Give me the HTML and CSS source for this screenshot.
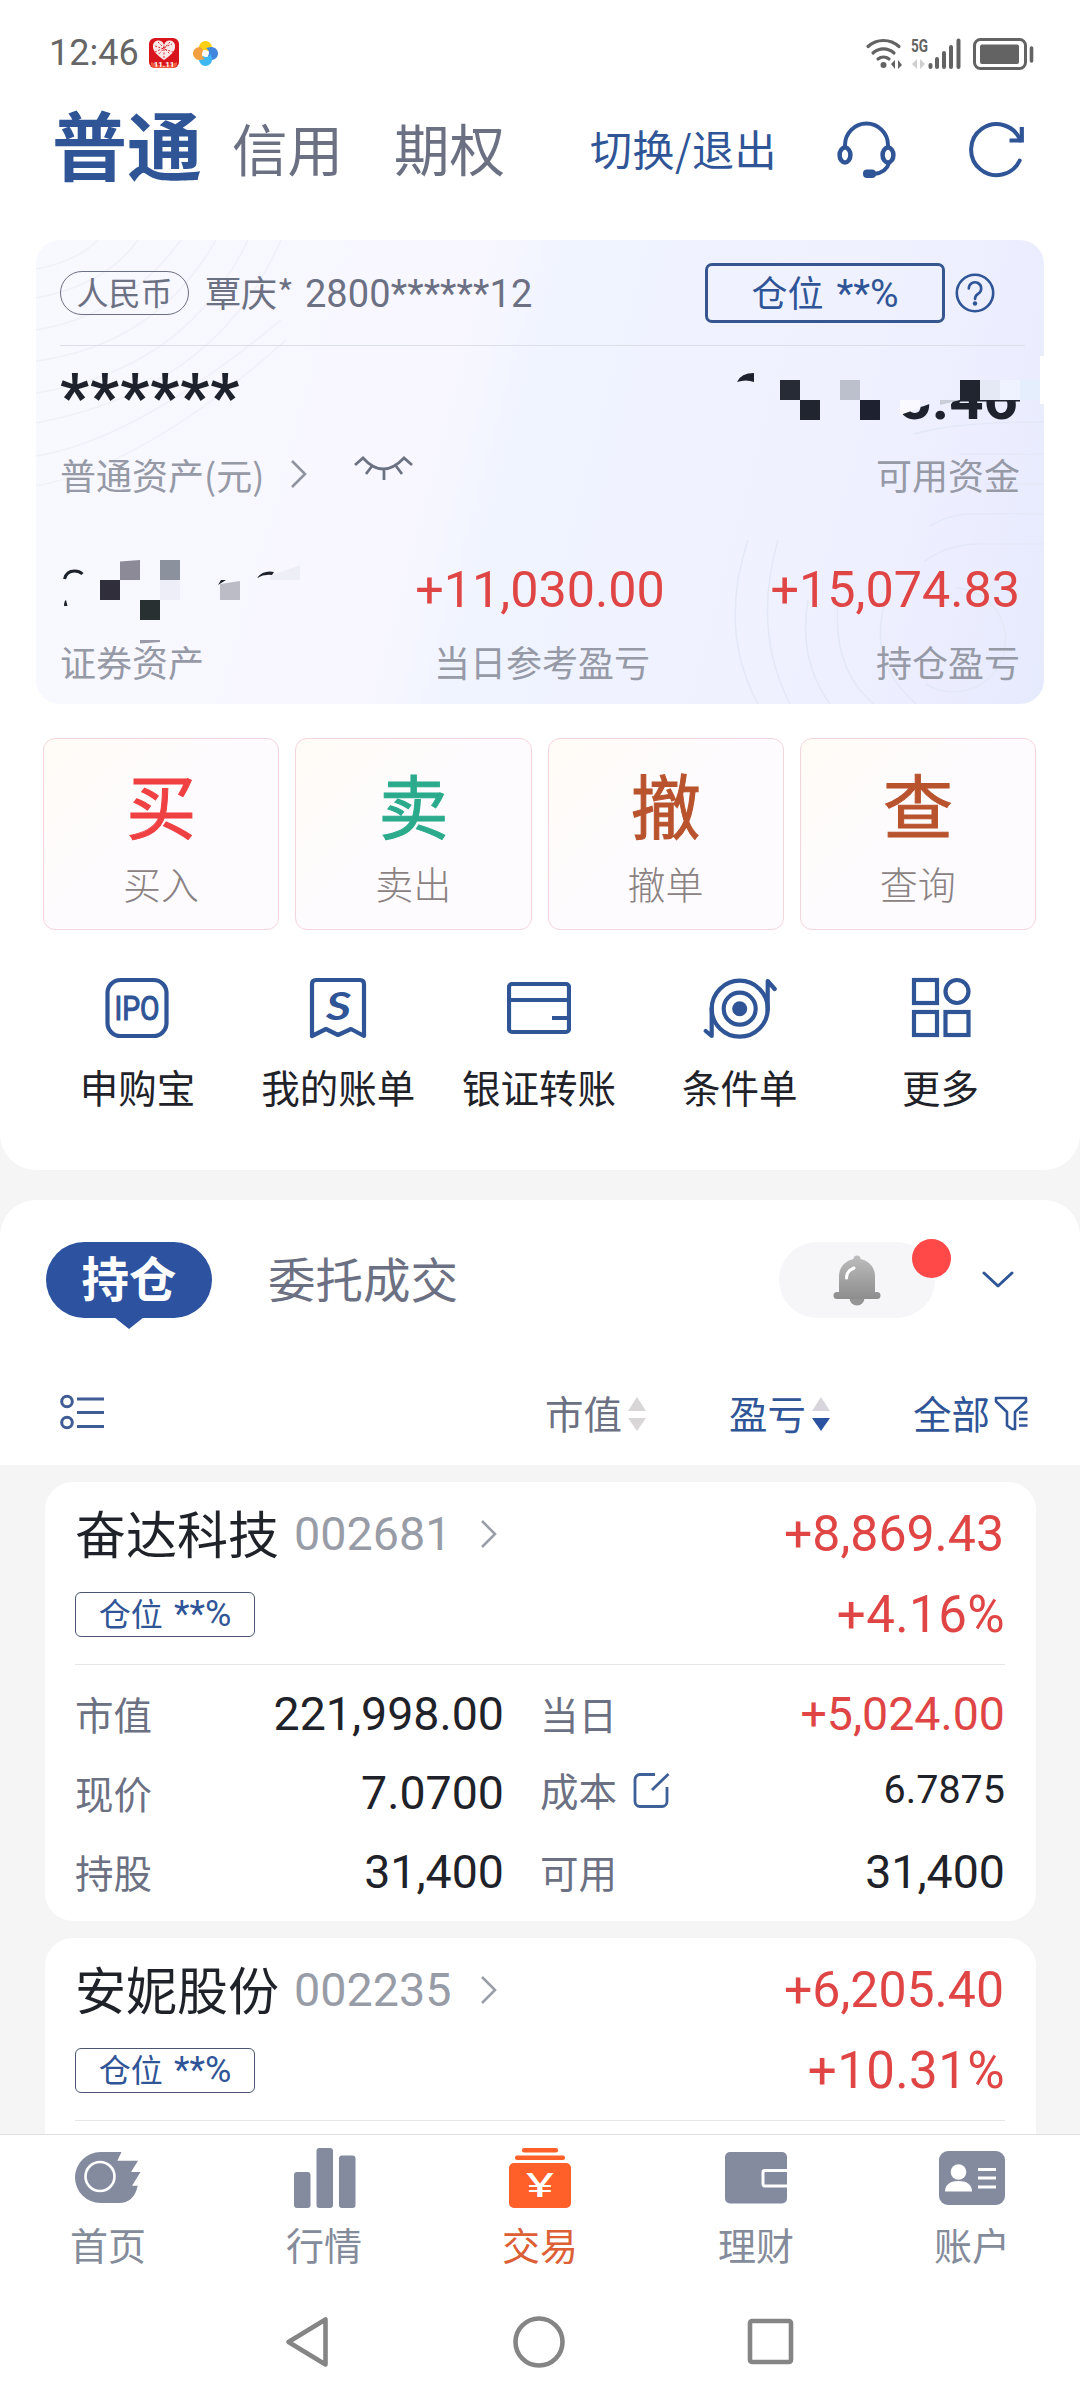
FILE: index.html
```html
<!DOCTYPE html>
<html lang="zh-CN">

<head>
  <meta charset="UTF-8">
  <meta name="viewport" content="width=device-width, initial-scale=1.0">
  <title>交易</title>
  <link rel="stylesheet" href="styles.css">
</head>

<body>
  <div class="content">

    <!-- Account section -->
    <section class="panel panel-top">
      <div class="status-bar">
        <span class="time">12:46</span>
        <svg class="app-heart" width="30" height="30" viewBox="0 0 30 30">
          <rect width="30" height="30" rx="6" fill="#d8141c" />
          <path d="M2 24q13 7 26 0v2a4 4 0 0 1-4 4H6a4 4 0 0 1-4-4z" fill="#f0583c" />
          <path d="M15 22C8 17 4 13 4 9a5.500 5.500 0 0 1 11-2 5.500 5.500 0 0 1 11 2c0 4-4 8-11 13z" fill="#fbe9ea" />
          <path d="M6 8l18 6M15 4v17M6 14l17-8M9 4l12 12M21 4L9 17" stroke="#d8141c" stroke-width=".9" stroke-dasharray="2 1.500" />
          <text x="15" y="29" text-anchor="middle" class="heart-text">11.11</text>
        </svg>
        <svg width="25" height="25" viewBox="0 0 25 25">
          <path d="M6 7a6.500 6.500 0 0 1 13-1c0 2-2 4-4 4-3-2-6-1-8 2z" fill="#fdd016" />
          <path d="M18 6a6.500 6.500 0 0 1 1 13c-2 0-4-2-4-4 2-3 1-6-2-8z" fill="#3f86dc" />
          <path d="M19 18a6.500 6.500 0 0 1-13 1c0-2 2-4 4-4 3 2 6 1 8-2z" fill="#3db8f2" />
          <path d="M7 19A6.500 6.500 0 0 1 6 6c2 0 4 2 4 4-2 3-1 6 2 8z" fill="#f3a040" />
          <circle cx="12.500" cy="12.500" r="2.400" fill="#fff" />
        </svg>
        <svg class="status-icons" width="170" height="36" viewBox="0 0 170 36" fill="none" stroke="#636363" stroke-linecap="round">
          <g stroke-width="3.200">
            <path d="M3 11.500a23 23 0 0 1 31 0" />
            <path d="M8 18a15.500 15.500 0 0 1 21 0" />
            <path d="M13 24a8.500 8.500 0 0 1 11 0" />
          </g>
          <circle cx="18.500" cy="30" r="3" fill="#636363" stroke="none" />
          <path d="M26 29l4-4v9zM33 25v9l4-4z" fill="#636363" stroke="none" />
          <text x="46" y="16.500" textLength="17" lengthAdjust="spacingAndGlyphs" class="net-text">5G</text>
          <path d="M47 29l5-5v10zM55 24v10l5-5z" fill="#cfcfcf" stroke="none" />
          <path d="M65.500 30v2M72 24v8M79 18v14M86 12v20M93.500 5.500V32" stroke-width="4" />
          <rect x="109.500" y="4.500" width="51" height="29" rx="6" stroke-width="3" />
          <rect x="115" y="9.500" width="39" height="19.500" rx="2" fill="#636363" stroke="none" />
          <path d="M166.500 13v13" stroke-width="3.600" />
        </svg>
      </div>

      <header class="header">
        <span class="account-tab active">普通</span>
        <span class="account-tab">信用</span>
        <span class="account-tab">期权</span>
        <span class="switch">切换/退出</span>
        <svg class="icon-service" width="62" height="60" viewBox="0 0 62 60" fill="none" stroke="#2f5597" stroke-width="4.500">
          <ellipse cx="9" cy="35" rx="5.400" ry="7.500" />
          <ellipse cx="52" cy="35" rx="5.400" ry="7.500" />
          <path d="M9 27v-2a21.500 21.500 0 0 1 43 0v2M53 43c-2 7-7 10-15 11" stroke-width="4" />
          <rect x="27" y="49.500" width="13" height="8.500" rx="4" fill="#2f5597" stroke="none" />
        </svg>
        <svg class="icon-refresh" width="62" height="58" viewBox="0 0 62 58" fill="none" stroke="#2f5597" stroke-width="4">
          <path d="M53.700 39.500A25.500 25.500 0 1 1 54.400 19.500" stroke-linecap="round" />
          <path d="M55.800 6v13.500H43.500" stroke-width="4.200" />
        </svg>
      </header>

      <div class="asset-card">
        <svg class="card-lines" width="1008" height="464" viewBox="0 0 1008 464" fill="none" stroke-width="1.500">
          <g stroke="#eff0f8">
            <path d="M0 29Q40 22 62 0M0 58Q70 45 102 0M0 90Q90 75 145 0M0 121Q120 105 180 0M0 153Q150 130 212 0M0 183Q180 150 245 0M0 216Q100 200 245 80M0 246Q110 225 250 100" />
          </g>
          <g stroke="#e3e8f6">
            <path d="M1008 182q-90 0-130 12M1008 214h-84M1008 244h-60M1008 274h-78q-20 2-36 12M1008 304h-70q-30 2-50 18" />
            <path d="M712 300q-30 90 10 164M742 300q-26 90 12 164M772 360q-10 60 22 104M802 360q-6 70 36 104" />
            <path d="M920 348a52 52 0 1 1-30 96M850 360q-20 60 30 104" />
          </g>
        </svg>

        <div class="card-head">
          <span class="currency">人民币</span>
          <span class="owner">覃庆* <span class="num">2800******12</span></span>
          <span class="position-btn">仓位 <span class="num">**%</span></span>
          <svg width="40" height="40" viewBox="0 0 40 40" fill="none" stroke="#2f5597" stroke-width="2.600">
            <circle cx="20" cy="20" r="18.200" />
            <path d="M13.800 15.500a6.200 6.200 0 1 1 9.500 5.200c-2.300 1.500-3.300 2.700-3.300 5.300" stroke-linecap="round" />
            <circle cx="20" cy="30.500" r="2.200" fill="#2f5597" stroke="none" />
          </svg>
        </div>

        <div class="total">******</div>
        <div class="card-row total-label">
          <span>普通资产(元)</span>
          <svg class="chevron" width="18" height="30" viewBox="0 0 18 30" fill="none" stroke="#8f93a0" stroke-width="2.600"><path d="M2 2l13 13L2 28" /></svg>
          <svg class="eye" width="60" height="28" viewBox="0 0 60 28" fill="none" stroke="#6b7282" stroke-width="2.800">
            <path d="M1 11l8-7q20 22 41 0l8 7M18 12l-6 8M30 14v12M42 12l6 8" />
          </svg>
          <span class="right">可用资金</span>
        </div>
        <div class="card-row profit">
          <span class="num center">+11,030.00</span>
          <span class="num right">+15,074.83</span>
        </div>
        <div class="card-row profit-label">
          <span>证券资产</span>
          <span class="center">当日参考盈亏</span>
          <span class="right">持仓盈亏</span>
        </div>

        <!-- Blocks that cover the private amounts -->
        <svg class="mosaic" width="1008" height="464" viewBox="0 0 1008 464">
          <defs>
            <clipPath id="amount-cut"><path d="M864 182v-9l24-7 16-6h84v24z" /></clipPath>
          </defs>
          <text x="982" y="178.500" text-anchor="end" class="amount" clip-path="url(#amount-cut)">5.46</text>
          <path d="M701 142q4-9 17-9v9q-8-3-17 0z" fill="#1d222d" />
          <rect x="744" y="140" width="20" height="20" fill="#262b36" />
          <rect x="764" y="160" width="20" height="20" fill="#20252f" />
          <rect x="804" y="140" width="20" height="20" fill="#bcc0cc" />
          <rect x="824" y="160" width="20" height="20" fill="#1e2230" />
          <path d="M864 160h20v8l-20 7z" fill="#f9f9ff" />
          <path d="M904 160h20l-20 5z" fill="#c9cdd8" />
          <rect x="924" y="140" width="20" height="20" fill="#20252f" />
          <rect x="944" y="140" width="20" height="20" fill="#e5e9f5" />
          <path d="M924 160.800h60" stroke="#20252f" stroke-width="1.600" />
          <rect x="964" y="140" width="20" height="20" fill="#eef3ff" />
          <rect x="984" y="140" width="20" height="20" fill="#e4eefd" />
          <rect x="1004" y="116" width="4" height="48" fill="#fff" />

          <path d="M28.500 339q2-8 10-8 5 0 8 3" fill="none" stroke="#1d222d" stroke-width="3" />
          <path d="M28 366q0-5 2-6l1.500 6z" fill="#1d222d" />
          <path d="M84 321.500l20-1.500v20H84z" fill="#8c8a96" />
          <rect x="124" y="320" width="20" height="20" fill="#8b929e" />
          <rect x="64" y="340" width="20" height="20" fill="#302e3a" />
          <rect x="124" y="340" width="20" height="20" fill="#eeeef8" />
          <rect x="104" y="360" width="20" height="20" fill="#283032" />
          <path d="M104 400h20v2l-20 1.500z" fill="#9a9aa8" />
          <path d="M182 345l3-5h5z" fill="#1d222d" />
          <path d="M184 344l20-3v19h-20z" fill="#bbbcc6" />
          <path d="M221 338q6-8 17-6l-2 3q-8-1-15 3z" fill="#1d222d" />
          <path d="M234 336l30-11v15h-30z" fill="#eeeef7" />
        </svg>
      </div>

      <div class="trade-grid">
        <div class="trade-item"><span class="trade-big buy">买</span><span class="trade-name">买入</span></div>
        <div class="trade-item"><span class="trade-big sell">卖</span><span class="trade-name">卖出</span></div>
        <div class="trade-item"><span class="trade-big">撤</span><span class="trade-name">撤单</span></div>
        <div class="trade-item"><span class="trade-big">查</span><span class="trade-name">查询</span></div>
      </div>

      <div class="shortcut-grid">
        <div class="shortcut">
          <svg width="64" height="64" viewBox="0 0 64 64" fill="none" stroke="#2f5597" stroke-width="4.200">
            <rect x="2.500" y="4" width="59" height="56" rx="13" />
            <text x="9.500" y="44" textLength="45" lengthAdjust="spacingAndGlyphs" class="ipo-text">IPO</text>
          </svg>
          <span>申购宝</span>
        </div>
        <div class="shortcut">
          <svg width="64" height="64" viewBox="0 0 64 64" fill="none" stroke="#2f5597" stroke-width="4.200" stroke-linejoin="round">
            <path d="M6 60V8q0-4 4-4h44q4 0 4 4v52l-13-7-13 6-12-6z" />
            <text x="20" y="44" textLength="25" lengthAdjust="spacingAndGlyphs" class="bill-text">S</text>
          </svg>
          <span>我的账单</span>
        </div>
        <div class="shortcut">
          <svg width="64" height="64" viewBox="0 0 64 64" fill="none" stroke="#2f5597" stroke-width="4.200">
            <rect x="2" y="8" width="60" height="48" rx="3" />
            <path d="M2 24h60M62 42H45" />
          </svg>
          <span>银证转账</span>
        </div>
        <div class="shortcut">
          <svg width="74" height="64" viewBox="0 0 74 64" fill="none" stroke="#2f5597" stroke-width="4.200">
            <circle cx="36.700" cy="32.700" r="28" />
            <circle cx="36.700" cy="32.700" r="16" />
            <circle cx="36.700" cy="32.700" r="7.500" fill="#2f5597" stroke="none" />
            <path d="M64.700 34V5l7 8M8.700 32v28l-6-5" stroke-linejoin="round" stroke-linecap="round" />
          </svg>
          <span>条件单</span>
        </div>
        <div class="shortcut">
          <svg width="64" height="64" viewBox="0 0 64 64" fill="none" stroke="#2f5597" stroke-width="4.200">
            <rect x="5" y="4" width="23" height="23" />
            <circle cx="48" cy="15.500" r="11.500" />
            <rect x="5" y="36" width="23" height="23" />
            <rect x="36.500" y="36" width="23" height="23" />
          </svg>
          <span>更多</span>
        </div>
      </div>
    </section>

    <!-- Holdings section -->
    <section class="panel panel-holdings">
      <div class="hold-tabs">
        <span class="hold-tab active">持仓</span>
        <span class="hold-tab">委托成交</span>
        <div class="bell">
          <svg width="48" height="52" viewBox="0 0 48 52">
            <defs>
              <linearGradient id="bell-fill" x1="0" y1="0" x2="0" y2="1">
                <stop offset="0" stop-color="#bdbdbd" />
                <stop offset="1" stop-color="#8d8d8d" />
              </linearGradient>
            </defs>
            <circle cx="24" cy="44" r="7.500" fill="#969696" />
            <path d="M20.500 5a3.500 3.500 0 0 1 7 0c9 2 14.500 9 14.500 17v16h2a3.500 3.500 0 0 1 0 7H4a3.500 3.500 0 0 1 0-7h2V22c0-8 5.500-15 14.500-17z" fill="url(#bell-fill)" />
            <path d="M13.500 24q0-7 7.500-10" fill="none" stroke="#fff" stroke-width="3" stroke-linecap="round" />
          </svg>
          <span class="dot"></span>
        </div>
        <svg width="32" height="18" viewBox="0 0 32 18" fill="none" stroke="#2f5597" stroke-width="3" stroke-linecap="round" stroke-linejoin="round"><path d="M2 2l14 13L30 2" /></svg>
      </div>

      <div class="sort-bar">
        <svg width="44" height="36" viewBox="0 0 44 36" fill="none" stroke="#3f5c94" stroke-width="3">
          <circle cx="7" cy="7.500" r="5.300" />
          <circle cx="7" cy="28.500" r="5.300" />
          <path d="M17 5h27M17 18.500h27M17 32.500h27" />
        </svg>
        <span class="sort-item market">市值
          <svg width="18" height="36" viewBox="0 0 18 36" fill="#d8d6d6"><path d="M9 1l9 14H0zM9 35l9-13H0z" /></svg>
        </span>
        <span class="sort-item active">盈亏
          <svg width="18" height="36" viewBox="0 0 18 36" fill="#d8d6dc"><path d="M9 1l9 14H0z" /><path d="M9 35l9-13H0z" fill="#2b52a0" /></svg>
        </span>
        <span class="sort-item active filter">全部
          <svg width="34" height="36" viewBox="0 0 34 36" fill="none" stroke="#2f5597" stroke-width="2.600" stroke-linejoin="round">
            <path d="M2 2h30v3.500l-11 10.500v17h-3l-5-3.500V16L2 5.500z" />
            <path d="M25 16.500h8.500M25 23h8.500M25 29.500h8.500" />
          </svg>
        </span>
      </div>
    </section>

    <div class="stock-list">
      <div class="stock">
        <div class="stock-head">
          <div class="stock-title">
            <span class="stock-name">奋达科技</span>
            <span class="num stock-code">002681</span>
            <svg width="18" height="30" viewBox="0 0 18 30" fill="none" stroke="#9a9ea8" stroke-width="2.600"><path d="M2 2l13 13L2 28" /></svg>
            <span class="num gain">+8,869.43</span>
          </div>
          <div class="stock-sub">
            <span class="tag">仓位 <span class="num">**%</span></span>
            <span class="num gain">+4.16%</span>
          </div>
        </div>
        <div class="stock-data">
          <div class="cell"><span class="label">市值</span><span class="num">221,998.00</span></div>
          <div class="cell"><span class="label">当日</span><span class="num red">+5,024.00</span></div>
          <div class="cell"><span class="label">现价</span><span class="num">7.0700</span></div>
          <div class="cell cost"><span class="label">成本</span>
            <svg width="37" height="37" viewBox="0 0 37 37" fill="none" stroke="#3f5f98" stroke-width="2.800">
              <path d="M22 2.500H7A5 5 0 0 0 2 7.500v22a5 5 0 0 0 5 5h22a5 5 0 0 0 5-5V15" />
              <path d="M19 18L35.500 2" />
            </svg>
            <span class="num">6.7875</span>
          </div>
          <div class="cell"><span class="label">持股</span><span class="num">31,400</span></div>
          <div class="cell"><span class="label">可用</span><span class="num">31,400</span></div>
        </div>
      </div>

      <div class="stock">
        <div class="stock-head">
          <div class="stock-title">
            <span class="stock-name">安妮股份</span>
            <span class="num stock-code">002235</span>
            <svg width="18" height="30" viewBox="0 0 18 30" fill="none" stroke="#9a9ea8" stroke-width="2.600"><path d="M2 2l13 13L2 28" /></svg>
            <span class="num gain">+6,205.40</span>
          </div>
          <div class="stock-sub">
            <span class="tag">仓位 <span class="num">**%</span></span>
            <span class="num gain">+10.31%</span>
          </div>
        </div>
        <div class="stock-data"></div>
      </div>
    </div>
  </div>

  <!-- Bottom navigation -->
  <nav class="tab-bar">
    <div class="tab">
      <svg width="72" height="60" viewBox="0 0 72 60">
        <path d="M28.500 4h21l-4.200 8.700h20.700L59 24h9.500L60 37.700h5.700Q62 55 46.800 55H28.500a25.500 25.500 0 0 1 0-51z" fill="#848b9f" />
        <circle cx="28" cy="28.500" r="14.500" fill="none" stroke="#fff" stroke-width="2.600" />
      </svg>
      <span>首页</span>
    </div>
    <div class="tab">
      <svg width="64" height="60" viewBox="0 0 64 60" fill="#848b9f">
        <rect x="2" y="24" width="16.500" height="36" rx="3" />
        <rect x="24.500" y="0" width="16.500" height="60" rx="3" />
        <rect x="47" y="7.500" width="16.500" height="52.500" rx="3" />
      </svg>
      <span>行情</span>
    </div>
    <div class="tab active">
      <svg width="62" height="60" viewBox="0 0 62 60" fill="#ff5f28">
        <rect x="13" y="0" width="36" height="4.500" rx="2" />
        <rect x="6" y="7.500" width="50" height="4.500" rx="2" />
        <rect x="0" y="15" width="62" height="45" rx="5" />
        <text x="17" y="49" textLength="28" lengthAdjust="spacingAndGlyphs" class="yen">¥</text>
      </svg>
      <span>交易</span>
    </div>
    <div class="tab">
      <svg width="62" height="60" viewBox="0 0 62 60">
        <rect x="0" y="4" width="62" height="51.500" rx="5" fill="#848b9f" />
        <path d="M62 22.500H40q-2 0-2 2v11.500q0 2 2 2h22" fill="none" stroke="#fff" stroke-width="3" />
      </svg>
      <span>理财</span>
    </div>
    <div class="tab">
      <svg width="66" height="60" viewBox="0 0 66 60">
        <rect x="0" y="3" width="66" height="54" rx="9" fill="#848b9f" />
        <circle cx="19.500" cy="24" r="7.800" fill="#fff" />
        <path d="M6 43.500C6 36 12 33 19.500 33S33 36 33 43.500z" fill="#fff" />
        <path d="M39 21.500h18M39 30h18M39 39h18" stroke="#fff" stroke-width="3.200" />
      </svg>
      <span>账户</span>
    </div>
  </nav>
  <div class="system-bar">
    <svg width="46" height="52" viewBox="0 0 46 52"><path d="M40.500 3.500v45L3.500 26z" /></svg>
    <svg width="52" height="52" viewBox="0 0 52 52"><circle cx="26" cy="26" r="23.500" /></svg>
    <svg width="48" height="48" viewBox="0 0 48 48"><rect x="3" y="3" width="41" height="41" rx="2" /></svg>
  </div>
</body>

</html>
```

FILE: styles.css
```css
* {
  box-sizing: border-box;
}

body {
  margin: 0;
  width: 1080px;
  height: 2400px;
  display: flex;
  flex-direction: column;
  overflow: hidden;
  background: #f5f5f6;
  color: #1f2229;
  font-family: "Noto Sans CJK SC", sans-serif;
}

svg {
  display: block;
  flex-shrink: 0;
}

.num {
  font-family: Roboto, "Noto Sans CJK SC", sans-serif;
}

.content {
  flex: 1;
  min-height: 0;
  overflow: hidden;
}

.panel {
  background: #fff;
}

.panel-top {
  height: 1170px;
  border-radius: 0 0 36px 36px;
}

/* Status bar */
.status-bar {
  display: flex;
  align-items: center;
  height: 106px;
  padding: 0 45px 0 49px;
}

.time {
  width: 100px;
  font-family: Roboto, sans-serif;
  font-size: 36px;
  color: #666;
}

.app-heart {
  margin-right: 14px;
}

.heart-text {
  font: bold 8px Roboto, sans-serif;
  fill: #fff;
}

.status-icons {
  margin-left: auto;
}

.net-text {
  font: bold 18px Roboto, sans-serif;
  fill: #636363;
  stroke: none;
}

/* Header */
.header {
  display: flex;
  align-items: center;
  height: 88px;
  padding: 0 52px;
  line-height: 88px;
}

.account-tab {
  margin-right: 51px;
  padding-bottom: 7px;
  font-size: 55.5px;
  color: #6c7083;
}

.account-tab.active {
  margin-right: 30px;
  padding-bottom: 15px;
  font-size: 75px;
  font-weight: bold;
  color: #2f5597;
}

.switch {
  margin-left: 34px;
  padding-bottom: 4px;
  font-size: 42px;
  letter-spacing: .5px;
  color: #2f5597;
}

.icon-service {
  margin-left: auto;
}

.icon-refresh {
  margin-left: 68px;
}

/* Asset card */
.asset-card {
  position: relative;
  width: 1008px;
  height: 464px;
  margin: 46px 36px 34px;
  padding: 0 24px;
  border-radius: 24px;
  overflow: hidden;
  background: linear-gradient(105deg, #f8f8ff 0%, #f8f7ff 40%, #eff4ff 48%, #f0f1ff 75%, #eceeff 88%, #e6eafd 100%);
  color: #9699a6;
  font-size: 36px;
}

.card-lines,
.mosaic {
  position: absolute;
  left: 0;
  top: 0;
}

.card-head,
.total,
.card-row {
  position: relative;
}

.card-head {
  display: flex;
  align-items: center;
  width: 965px;
  height: 106px;
  padding-right: 30px;
  border-bottom: 1px solid #dcdee8;
  color: #6c7083;
}

.currency {
  width: 129px;
  height: 44px;
  border: 1px solid #6c7083;
  border-radius: 22px;
  font-size: 32px;
  line-height: 39px;
  text-align: center;
}

.owner {
  margin-left: 16px;
  line-height: 60px;
  word-spacing: 3px;
}

.owner .num {
  font-size: 38px;
  letter-spacing: .1px;
}

.position-btn {
  width: 240px;
  height: 60px;
  margin-left: auto;
  margin-right: 10px;
  border: 3px solid #36568f;
  border-radius: 7px;
  color: #2f5597;
  font-size: 36px;
  line-height: 50px;
  text-align: center;
  word-spacing: 5px;
}

.position-btn .num {
  font-size: 39px;
}

.total {
  height: 84px;
  color: #1d222d;
  font: bold 64px/103px Roboto, sans-serif;
  letter-spacing: 1px;
}

.card-row {
  display: flex;
  align-items: center;
  width: 960px;
}

.card-row .right {
  width: 320px;
  margin-left: auto;
  text-align: right;
}

.card-row .center {
  position: absolute;
  left: 317px;
  width: 326px;
  text-align: center;
}

.total-label {
  height: 88px;
}

.chevron {
  margin-left: 26px;
}

.eye {
  margin-left: 46px;
  margin-bottom: 13px;
}

.profit {
  height: 80px;
  margin-top: 31px;
  color: #e04545;
  font-size: 50.3px;
}

.profit-label {
  height: 64px;
}

.profit-label .center {
  left: 319px;
}

.amount {
  font: bold 60px Roboto, sans-serif;
  fill: #1d222d;
}

/* Buy / sell buttons */
.trade-grid {
  display: grid;
  grid-template-columns: repeat(4, 1fr);
  gap: 16px;
  padding: 0 44px 0 43px;
}

.trade-item {
  display: flex;
  flex-direction: column;
  align-items: center;
  height: 192px;
  padding-top: 25px;
  border: 1px solid #f5d5dc;
  border-radius: 12px;
  background: linear-gradient(135deg, #fffcf6 0%, #fefbfe 45%, #fefbff 100%);
}

.trade-big {
  height: 80px;
  font-size: 70px;
  line-height: 80px;
  color: #b8532d;
  -webkit-text-stroke: 1px currentColor;
}

.trade-big.buy {
  color: #ef4042;
}

.trade-big.sell {
  color: #2bab8c;
}

.trade-name {
  margin-top: 14px;
  font-size: 38px;
  font-weight: 300;
  line-height: 50px;
  color: #8a8282;
}

/* Shortcuts */
.shortcut-grid {
  display: grid;
  grid-template-columns: repeat(5, 1fr);
  padding: 46px 39px 0 37px;
}

.shortcut {
  display: flex;
  flex-direction: column;
  align-items: center;
  gap: 16px;
  font-size: 38.5px;
  line-height: 60px;
  color: #1f2229;
}

.ipo-text {
  font: 400 34px Roboto, sans-serif;
  fill: #2f5597;
  stroke-width: 1.2;
}

.bill-text {
  font: italic bold 38px Lato, sans-serif;
  fill: #2f5597;
  stroke: none;
}

/* Holdings */
.panel-holdings {
  height: 265px;
  margin-top: 30px;
  border-radius: 36px 36px 0 0;
}

.hold-tabs {
  display: flex;
  align-items: center;
  height: 118px;
  padding: 42px 66px 0 46px;
}

.hold-tab {
  padding-bottom: 4px;
  font-size: 47.5px;
  line-height: 70px;
  color: #6c7083;
}

.hold-tab.active {
  position: relative;
  width: 166px;
  height: 76px;
  margin-right: 56px;
  border-radius: 38px;
  background: #2d529f;
  color: #fff;
  font-weight: bold;
  text-align: center;
}

.hold-tab.active::after {
  content: "";
  position: absolute;
  left: 68px;
  top: 75px;
  border: 15px solid transparent;
  border-top: 12px solid #2d529f;
  border-bottom: 0;
}

.bell {
  position: relative;
  display: flex;
  align-items: center;
  justify-content: center;
  width: 156px;
  height: 76px;
  margin-left: auto;
  margin-right: 47px;
  border-radius: 38px;
  background: #f6f6f8;
}

.dot {
  position: absolute;
  right: -16px;
  top: -3px;
  width: 39px;
  height: 39px;
  border-radius: 50%;
  background: #ff4848;
}

.sort-bar {
  display: flex;
  align-items: center;
  height: 147px;
  padding: 41px 52px 0 60px;
  font-size: 38.5px;
  color: #6c7083;
}

.sort-item {
  display: flex;
  align-items: center;
  gap: 6px;
  margin-right: 83px;
  padding-bottom: 1px;
  line-height: 50px;
}

.sort-item svg {
  margin-top: 4px;
}

.sort-item.market {
  margin-left: auto;
}

.sort-item.active {
  color: #2f5597;
}

.sort-item.filter {
  gap: 4px;
  margin-right: 0;
}

/* Stock cards */
.stock-list {
  display: flex;
  flex-direction: column;
  gap: 17px;
  padding: 17px 44px 0 45px;
}

.stock {
  height: 439px;
  padding: 0 31px 0 30px;
  border-radius: 28px;
  background: #fff;
}

.stock-head {
  height: 183px;
  padding-top: 12px;
  border-bottom: 1px solid #e6e6e8;
}

.stock-title,
.stock-sub {
  display: flex;
  align-items: center;
  height: 80px;
}

.stock-title {
  padding-right: 1px;
}

.stock-name {
  font-size: 51px;
  line-height: 70px;
  padding-bottom: 4px;
}

.stock-code {
  width: 186px;
  margin-left: 15px;
  font-size: 46.7px;
  color: #989ca7;
}

.gain {
  margin-left: auto;
  color: #e04545;
  font-size: 50px;
}

.stock-sub .gain {
  font-size: 51px;
  letter-spacing: .4px;
}

.tag {
  width: 180px;
  height: 45px;
  border: 1px solid #4c5670;
  border-radius: 6px;
  color: #2f5597;
  font-size: 32px;
  line-height: 39px;
  text-align: center;
  word-spacing: 4px;
}

.tag .num {
  font-size: 36px;
}

.stock-data {
  display: grid;
  grid-template-columns: 429px 1fr;
  column-gap: 36px;
}

.cell {
  display: flex;
  align-items: center;
  height: 79px;
  padding-top: 19px;
  font-size: 38.5px;
  line-height: 60px;
  color: #6c7083;
}

.cell .label {
  padding-bottom: 2px;
}

.cell .num {
  margin-left: auto;
  font-size: 46.5px;
  color: #1f2229;
}

.cell .num.red {
  color: #e04545;
}

.cell.cost {
  padding-top: 13px;
}

.cell.cost svg {
  margin-left: 16px;
}

.cell.cost .num {
  font-size: 39.5px;
}

/* Bottom bars */
.tab-bar {
  display: flex;
  height: 149px;
  border-top: 1px solid #dfdfe3;
  background: #fff;
}

.tab {
  flex: 1;
  display: flex;
  flex-direction: column;
  align-items: center;
  gap: 8px;
  padding-top: 13px;
  font-size: 38px;
  line-height: 56px;
  color: #848b9a;
}

.tab.active {
  color: #dc5f35;
}

.yen {
  font: 400 34px Roboto, sans-serif;
  fill: #fff;
}

.system-bar {
  display: flex;
  align-items: center;
  justify-content: center;
  gap: 182px;
  height: 117px;
  background: #fff;
}

.system-bar svg {
  fill: none;
  stroke: #858585;
  stroke-width: 4.6;
  stroke-linejoin: round;
}
```
